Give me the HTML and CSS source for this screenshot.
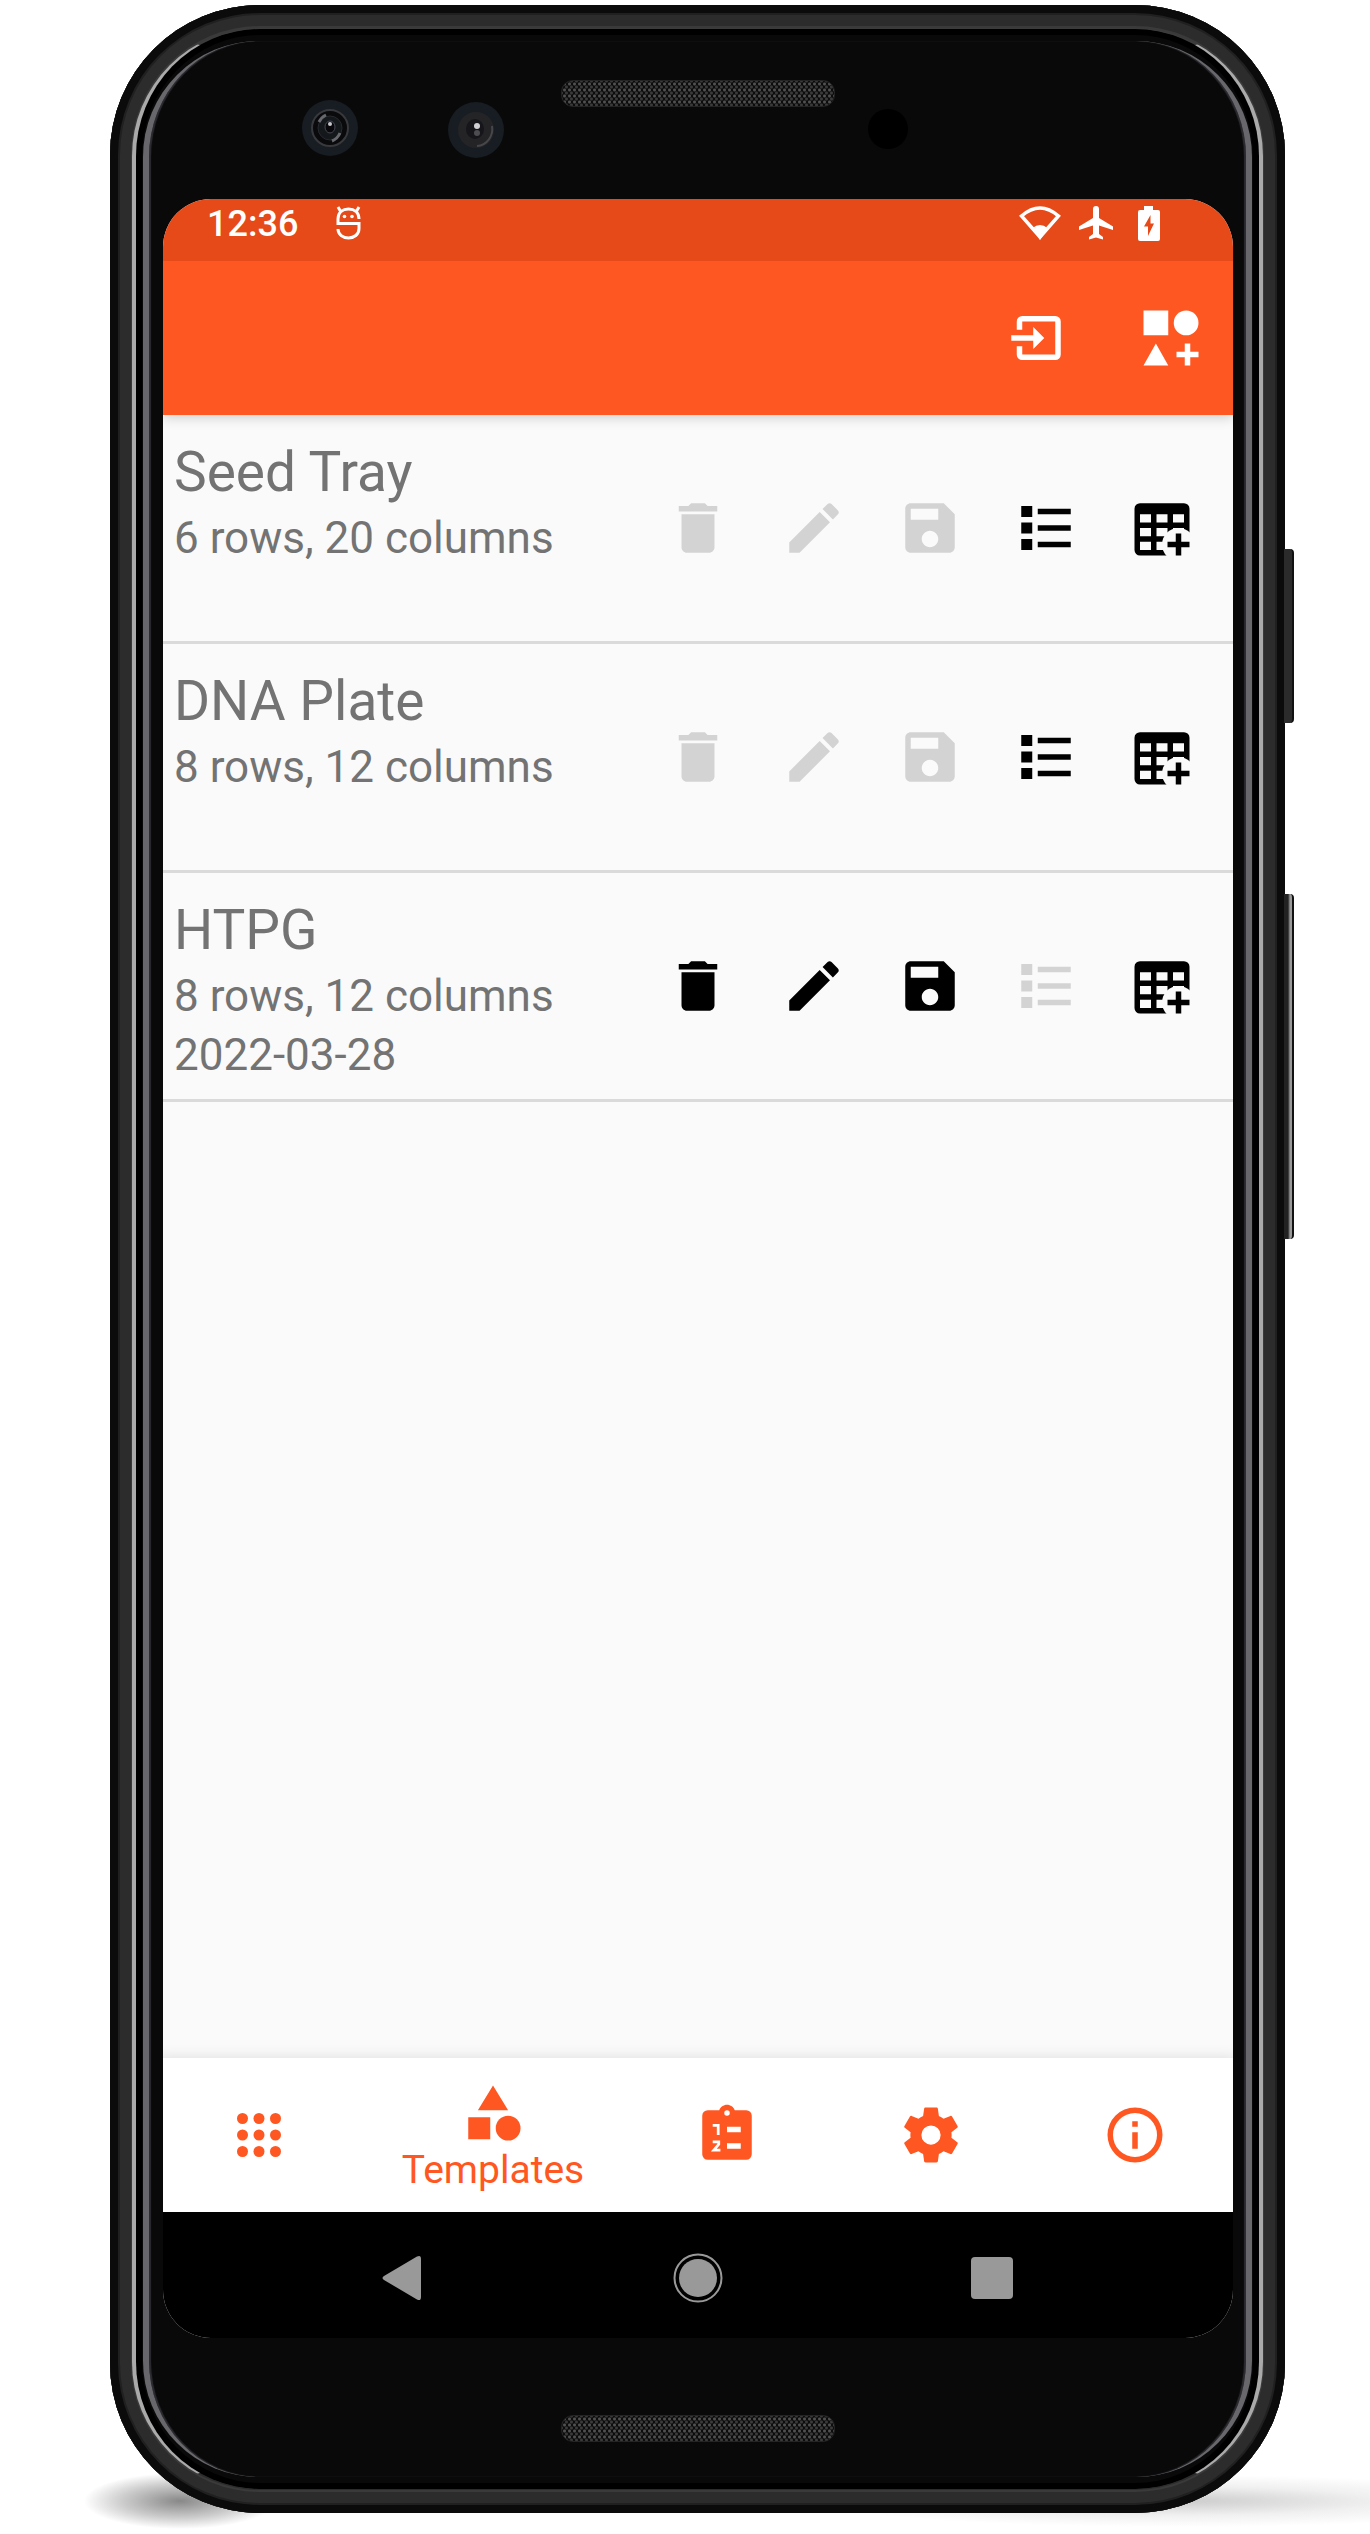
FILE: index.html
```html
<!DOCTYPE html>
<html lang="en">
<head>
<meta charset="utf-8">
<meta name="viewport" content="width=device-width, initial-scale=1">
<title>Templates</title>
<link rel="stylesheet" href="styles.css">
</head>
<body>
<svg class="sprite" aria-hidden="true">
  <mask id="plus-gap"><rect width="24" height="24" fill="#fff"/><circle cx="18" cy="18" r="6" fill="#000"/></mask>
  <symbol id="trash" viewBox="0 0 24 24"><path d="M6 19c0 1.1.9 2 2 2h8c1.1 0 2-.9 2-2V7H6v12zM19 4h-3.500l-1-1h-5l-1 1H5v2h14V4z"/></symbol>
  <symbol id="pencil" viewBox="0 0 24 24"><path d="M20.71 7.040C21.100 6.650 21.100 6 20.710 5.630L18.370 3.290C18 2.900 17.350 2.900 16.960 3.290L15.120 5.120L18.870 8.870M3 17.250V21H6.750L17.810 9.930L14.060 6.180L3 17.250Z"/></symbol>
  <symbol id="save" viewBox="0 0 24 24"><path d="M17 3H5c-1.110 0-2 .9-2 2v14c0 1.100.89 2 2 2h14c1.100 0 2-.9 2-2V7l-4-4zm-5 16c-1.660 0-3-1.340-3-3s1.340-3 3-3 3 1.340 3 3-1.340 3-3 3zm3-10H5V5h10v4z"/></symbol>
  <symbol id="list" viewBox="0 0 24 24"><path d="M3 4h4v4H3zM3 10h4v4H3zM3 16h4v4H3zM9 5h12v2H9zM9 11h12v2H9zM9 17h12v2H9z"/></symbol>
  <symbol id="table-plus" viewBox="0 0 24 24"><path mask="url(#plus-gap)" fill-rule="evenodd" d="M4 3h16a2 2 0 0 1 2 2v15a2 2 0 0 1-2 2H4a2 2 0 0 1-2-2V5a2 2 0 0 1 2-2zM4 7v3h4V7zM10 7v3h4V7zM16 7v3h4V7zM4 12v3h4v-3zM10 12v3h4v-3zM16 12v3h4v-3zM4 17v3h4v-3zM10 17v3h4v-3z"/><path d="M17 14h2v3h3v2h-3v3h-2v-3h-3v-2h3z"/></symbol>
  <symbol id="import" viewBox="0 0 24 24"><path d="M5 9V6a2 2 0 0 1 2-2h12a2 2 0 0 1 2 2v12a2 2 0 0 1-2 2H7a2 2 0 0 1-2-2v-3h2v3h12V6H7v3zM3 11h8V8l4 4-4 4v-3H3z"/></symbol>
  <symbol id="shapes-plus" viewBox="0 0 24 24"><path d="M2 2h9v9H2zM6.500 14L11 22H2zM17 14h2v3h3v2h-3v3h-2v-3h-3v-2h3z"/><circle cx="17.500" cy="6.500" r="4.500"/></symbol>
  <symbol id="dots" viewBox="0 0 24 24"><circle cx="6" cy="6" r="2"/><circle cx="12" cy="6" r="2"/><circle cx="18" cy="6" r="2"/><circle cx="6" cy="12" r="2"/><circle cx="12" cy="12" r="2"/><circle cx="18" cy="12" r="2"/><circle cx="6" cy="18" r="2"/><circle cx="12" cy="18" r="2"/><circle cx="18" cy="18" r="2"/></symbol>
  <symbol id="shapes" viewBox="0 0 24 24"><path d="M12 2l5.500 9h-11zM3 13.500h8v8H3z"/><circle cx="17.500" cy="17.500" r="4.500"/></symbol>
  <symbol id="tasks" viewBox="0 0 24 24"><path fill-rule="evenodd" d="M19 3h-4.180C14.400 1.840 13.300 1 12 1S9.600 1.840 9.180 3H5a2 2 0 0 0-2 2v14a2 2 0 0 0 2 2h14a2 2 0 0 0 2-2V5a2 2 0 0 0-2-2zM12 3a1 1 0 1 0 0 2 1 1 0 0 0 0-2zM12 9h5v2h-5zM12 15h5v2h-5z"/><path class="tick" d="M6.800 8.500h2V12M6.800 14.500h2.200v.9L7.200 17.500H9.600"/></symbol>
  <symbol id="gear" viewBox="0 0 24 24"><path d="M12 15.500A3.500 3.500 0 0 1 8.500 12A3.500 3.500 0 0 1 12 8.500A3.500 3.500 0 0 1 15.500 12A3.500 3.500 0 0 1 12 15.500M19.430 12.970C19.470 12.650 19.500 12.330 19.500 12C19.500 11.670 19.470 11.340 19.430 11L21.540 9.370C21.730 9.220 21.780 8.950 21.660 8.730L19.660 5.270C19.540 5.050 19.270 4.960 19.050 5.050L16.560 6.050C16.040 5.660 15.500 5.320 14.870 5.070L14.500 2.420C14.460 2.180 14.250 2 14 2H10C9.750 2 9.540 2.180 9.500 2.420L9.130 5.070C8.500 5.320 7.960 5.660 7.440 6.050L4.950 5.050C4.730 4.960 4.460 5.050 4.340 5.270L2.340 8.730C2.210 8.950 2.270 9.220 2.460 9.370L4.570 11C4.530 11.340 4.500 11.670 4.500 12C4.500 12.330 4.530 12.650 4.570 12.970L2.460 14.630C2.270 14.780 2.210 15.050 2.340 15.270L4.340 18.730C4.460 18.950 4.730 19.030 4.950 18.950L7.440 17.940C7.960 18.340 8.500 18.680 9.130 18.930L9.500 21.580C9.540 21.820 9.750 22 10 22H14C14.250 22 14.460 21.820 14.500 21.580L14.870 18.930C15.500 18.670 16.040 18.340 16.560 17.940L19.050 18.950C19.270 19.030 19.540 18.950 19.660 18.730L21.660 15.270C21.780 15.050 21.730 14.780 21.540 14.630L19.430 12.970Z"/></symbol>
  <symbol id="info" viewBox="0 0 24 24"><path fill-rule="evenodd" d="M12 2a10 10 0 1 0 0 20 10 10 0 0 0 0-20zM12 4a8 8 0 1 1 0 16 8 8 0 0 1 0-16zM11 7h2v2h-2zM11 11h2v6h-2z"/></symbol>
</svg>

<main class="stage">
  <div class="phone">
    <span class="side-key side-key-power"></span>
    <span class="side-key side-key-volume"></span>
    <div class="top-bezel">
      <svg class="lens" viewBox="0 0 56 58"><circle cx="28" cy="29" r="28" fill="#171d22"/><ellipse cx="28" cy="29" rx="18" ry="18" fill="#0a0a0c" stroke="#38393d" stroke-width="2"/><ellipse cx="28" cy="29" rx="12" ry="12" fill="#15181b" stroke="#26292d"/><path d="M17 23a14 16 0 0 1 7-7M38 34a14 16 0 0 1-8 8" fill="none" stroke="#66686e" stroke-width="3"/><ellipse cx="28" cy="28" rx="5" ry="6" fill="#08080b" stroke="#454653"/><circle cx="28" cy="25" r="2" fill="#c6c6ce"/></svg>
      <svg class="lens lens-second" viewBox="0 0 56 58"><circle cx="28" cy="29" r="28" fill="#171d22"/><ellipse cx="28" cy="29" rx="18" ry="18" fill="#242427"/><path d="M44 25a16 17 0 0 1-15 20" fill="none" stroke="#47474b" stroke-width="2"/><ellipse cx="27" cy="28" rx="9" ry="10" fill="#15151a"/><circle cx="29" cy="25" r="3" fill="#d0d0d4"/><circle cx="29" cy="32" r="3" fill="#4d4d51"/></svg>
      <span class="speaker"></span>
      <span class="sensor"></span>
    </div>

    <div class="screen">
      <div class="status-bar">
        <span class="clock">12:36</span>
        <svg class="debug" viewBox="0 0 25 34"><path d="M23 13C23 6 18 3 12.500 3S2 6 2 13v4.500h21v5c0 6-5 9.500-10.500 9.500S2 28.500 2 23M2 1l3 5M23 1l-3 5"/><circle cx="8.500" cy="10.500" r="1.800"/><circle cx="16" cy="10.500" r="1.800"/></svg>
        <span class="status-icons">
          <svg class="wifi" viewBox="0 0 42 34"><path d="M2.500 10Q21-6 39.500 10L21 31z" fill="none" stroke="#fff" stroke-width="3.500"/><path d="M13.500 22Q21 16 28.500 22L21 34z"/></svg>
          <svg class="plane" viewBox="0 0 34 34"><path d="M34 24v-3.500L20 12V3a3 3 0 0 0-6 0v9L0 20.500V24l14-4.500V28l-4 3v2.500l7-2 7 2V31l-4-3v-8.500z"/></svg>
          <svg class="battery" viewBox="0 0 22 35"><path fill-rule="evenodd" d="M6 0h9v4h5a2 2 0 0 1 2 2v27a2 2 0 0 1-2 2H2a2 2 0 0 1-2-2V6a2 2 0 0 1 2-2h4zM12.500 9L6 20.500h4V30L16 17.500H12.500z"/></svg>
        </span>
      </div>

      <header class="app-bar">
        <button class="bar-button" aria-label="Import template"><svg class="icon"><use href="#import"/></svg></button>
        <button class="bar-button" aria-label="New template"><svg class="icon"><use href="#shapes-plus"/></svg></button>
      </header>

      <ul class="templates">
        <li class="template">
          <div class="details"><h2 class="name">Seed Tray</h2><p class="meta">6 rows, 20 columns</p></div>
          <div class="actions">
            <button class="action" aria-label="Delete" disabled><svg class="icon"><use href="#trash"/></svg></button>
            <button class="action" aria-label="Edit" disabled><svg class="icon"><use href="#pencil"/></svg></button>
            <button class="action" aria-label="Save" disabled><svg class="icon"><use href="#save"/></svg></button>
            <button class="action" aria-label="List"><svg class="icon"><use href="#list"/></svg></button>
            <button class="action" aria-label="Add grid"><svg class="icon"><use href="#table-plus"/></svg></button>
          </div>
        </li>
        <li class="template">
          <div class="details"><h2 class="name">DNA Plate</h2><p class="meta">8 rows, 12 columns</p></div>
          <div class="actions">
            <button class="action" aria-label="Delete" disabled><svg class="icon"><use href="#trash"/></svg></button>
            <button class="action" aria-label="Edit" disabled><svg class="icon"><use href="#pencil"/></svg></button>
            <button class="action" aria-label="Save" disabled><svg class="icon"><use href="#save"/></svg></button>
            <button class="action" aria-label="List"><svg class="icon"><use href="#list"/></svg></button>
            <button class="action" aria-label="Add grid"><svg class="icon"><use href="#table-plus"/></svg></button>
          </div>
        </li>
        <li class="template">
          <div class="details"><h2 class="name">HTPG</h2><p class="meta">8 rows, 12 columns</p><p class="meta">2022-03-28</p></div>
          <div class="actions">
            <button class="action" aria-label="Delete"><svg class="icon"><use href="#trash"/></svg></button>
            <button class="action" aria-label="Edit"><svg class="icon"><use href="#pencil"/></svg></button>
            <button class="action" aria-label="Save"><svg class="icon"><use href="#save"/></svg></button>
            <button class="action" aria-label="List" disabled><svg class="icon"><use href="#list"/></svg></button>
            <button class="action" aria-label="Add grid"><svg class="icon"><use href="#table-plus"/></svg></button>
          </div>
        </li>
      </ul>

      <nav class="tabs">
        <a class="tab" href="#" aria-label="Grids"><svg class="icon"><use href="#dots"/></svg></a>
        <a class="tab tab-active" href="#" aria-current="page"><svg class="icon"><use href="#shapes"/></svg><span class="tab-label">Templates</span></a>
        <a class="tab" href="#" aria-label="Traits"><svg class="icon"><use href="#tasks"/></svg></a>
        <a class="tab" href="#" aria-label="Settings"><svg class="icon"><use href="#gear"/></svg></a>
        <a class="tab" href="#" aria-label="About"><svg class="icon"><use href="#info"/></svg></a>
      </nav>

      <div class="system-nav">
        <button class="system-button" aria-label="Back"><svg class="system-icon" viewBox="0 0 50 50"><path d="M5 23L38 3.500Q42 1.500 42 6v38q0 4.500-4 2.500L5 27q-3-2 0-4z"/></svg></button>
        <button class="system-button" aria-label="Home"><svg class="system-icon" viewBox="0 0 50 50"><circle cx="25" cy="25" r="19"/><circle cx="25" cy="25" r="23.500" fill="none" stroke="currentColor" stroke-width="2"/></svg></button>
        <button class="system-button" aria-label="Recent apps"><svg class="system-icon" viewBox="0 0 50 50"><rect x="4" y="4" width="42" height="42" rx="4"/></svg></button>
      </div>
    </div>

    <div class="bottom-bezel"><span class="speaker"></span></div>
  </div>
</main>
</body>
</html>
```
FILE: styles.css
```css
* { box-sizing: border-box; }

body {
  margin: 0;
  background: #fff;
  font-family: Roboto, sans-serif;
}

h2, p, ul { margin: 0; padding: 0; font-weight: 400; }

button { border: 0; padding: 0; background: none; font: inherit; color: inherit; }

svg { display: block; fill: currentColor; }

.sprite { position: absolute; width: 0; height: 0; }

.icon { width: 66px; height: 66px; }

.stage {
  display: flex;
  min-height: 100vh;
  padding: 5px 85px 21px 110px;
  background:
    radial-gradient(ellipse 96px 28px at 180px calc(100% - 33px), #888 0, #ccc 60%, transparent 100%) no-repeat,
    radial-gradient(ellipse 360px 26px at calc(100% - 190px) calc(100% - 33px), #ccc 0, #f0f0f0 55%, transparent 100%) no-repeat;
}

/* Handset body, with the bright rim and the glass edge as rings */
.phone {
  position: relative;
  flex: 1;
  display: flex;
  flex-direction: column;
  padding: 0 52px 0 53px;
  border-radius: 150px;
  background: #090909;
  box-shadow: inset 0 0 0 8px #0b0b0b, inset 0 0 0 10px #202020, inset 0 0 0 21px #2c2c2c, inset 0 0 0 24px #3a3a3a;
}

.phone::before,
.phone::after {
  content: "";
  position: absolute;
  pointer-events: none;
  border-style: solid;
}

.phone::before {
  inset: 23px 22px;
  border-width: 1px 4px;
  border-color: #3c3c3c #aaa #2c2c2c;
  border-radius: 128px;
  box-shadow: inset 0 0 0 6px #000;
}

.phone::after {
  inset: 36px 33px;
  border-width: 0 6px;
  border-color: #68686c;
  border-radius: 116px;
  box-shadow: inset 2px 0 1px #2c2c32, inset -2px 0 1px #2c2c32;
}

.side-key {
  position: absolute;
  right: -9px;
  width: 10px;
  border-radius: 0 4px 4px 0;
  background: #2b2b2b;
  border-right: 2px solid #111;
}

.side-key-power { top: 544px; height: 174px; }

.side-key-volume {
  top: 889px;
  height: 345px;
  background: linear-gradient(90deg, #222 50%, #999 75%);
}

.top-bezel { position: relative; height: 194px; padding-top: 75px; }

.bottom-bezel { height: 175px; padding-top: 77px; }

.speaker {
  display: block;
  width: 274px;
  height: 27px;
  margin: 0 auto;
  border: 1px solid #242424;
  border-radius: 12px;
  background:
    radial-gradient(circle, #505050 1px, transparent 2px) 0 0 / 5px 6px,
    radial-gradient(circle, #3a3a3a 1px, transparent 2px) 2px 3px / 5px 6px,
    #0c0c0c;
}

.lens { position: absolute; left: 139px; top: 94px; width: 56px; height: 58px; }

.lens-second { left: 285px; top: 96px; }

.sensor {
  position: absolute;
  left: 705px;
  top: 104px;
  width: 40px;
  height: 40px;
  border-radius: 50%;
  background: #000;
}

.screen {
  position: relative;
  z-index: 1;
  flex: 1;
  display: flex;
  flex-direction: column;
  overflow: hidden;
  border-radius: 48px;
  background: #fafafa;
}

.status-bar {
  position: relative;
  z-index: 1;
  display: flex;
  align-items: flex-start;
  gap: 38px;
  height: 62px;
  padding: 7px 73px 0 44px;
  background: #e64a19;
  color: #fff;
}

.clock { font-size: 36px; font-weight: 500; line-height: 36px; }

.debug { width: 25px; height: 34px; fill: #fff; }

.debug path { fill: none; stroke: #fff; stroke-width: 3; }

.status-icons { display: flex; gap: 18px; margin-left: auto; }

.wifi { width: 42px; height: 34px; }

.plane { width: 34px; height: 34px; }

.battery { width: 22px; height: 35px; margin-left: 7px; }

.app-bar {
  position: relative;
  display: flex;
  justify-content: flex-end;
  align-items: center;
  gap: 19px;
  height: 154px;
  padding-right: 4px;
  background: #ff5722;
  color: #fff;
  box-shadow: 0 2px 12px rgba(0, 0, 0, .2);
}

.bar-button { display: grid; place-items: center; width: 116px; height: 116px; }

.templates { flex: 1; list-style: none; }

.template {
  display: flex;
  height: 229px;
  padding: 0 13px 0 11px;
  border-bottom: 3px solid #dadada;
}

.details { flex: 1; padding-top: 24px; color: #737373; }

.name { margin-bottom: 4px; font-size: 55px; line-height: 66px; }

.meta { font-size: 44px; line-height: 59px; }

.actions { display: flex; align-items: center; color: #000; }

.action { display: grid; place-items: center; width: 116px; height: 116px; }

.action:disabled { color: #d3d3d3; }

.tabs {
  display: flex;
  height: 154px;
  margin: 0 -4px 0 -6px;
  background: #fff;
  color: #ff5722;
  box-shadow: 0 0 14px rgba(0, 0, 0, .12);
}

.tab {
  flex: 17;
  display: flex;
  flex-direction: column;
  align-items: center;
  justify-content: center;
  color: inherit;
  text-decoration: none;
}

.tab-active { flex: 22; }

.tab-label { padding-top: 4px; font-size: 39px; line-height: 40px; }

.tick { fill: none; stroke: #fff; stroke-width: 1; }

.system-nav {
  display: flex;
  justify-content: center;
  align-items: center;
  gap: 174px;
  height: 126px;
  padding-top: 6px;
  background: #000;
  color: #999;
}

.system-button { display: grid; place-items: center; width: 120px; height: 120px; }

.system-icon { width: 50px; height: 50px; }
```
